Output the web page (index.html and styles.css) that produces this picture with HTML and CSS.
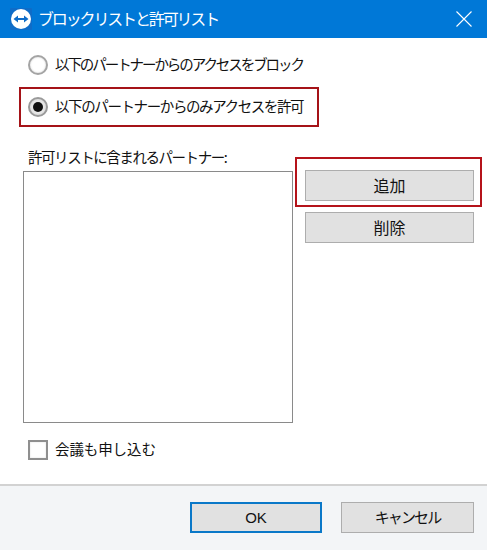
FILE: index.html
```html
<!DOCTYPE html>
<html lang="ja">
<head>
<meta charset="utf-8">
<title>ブロックリストと許可リスト</title>
<link rel="stylesheet" href="styles.css">
</head>
<body>
<div class="window">
  <header class="titlebar">
    <span class="app-icon">
      <svg viewBox="0 0 22 22" width="22" height="22">
        <rect width="22" height="22" rx="1" fill="#0e6cc8"/>
        <circle cx="11" cy="11" r="10" fill="#fff"/>
        <path d="M3.5 11 8 7.6V10h6V7.6l4.5 3.4-4.5 3.4V12H8v2.4z" fill="#0e6cc8"/>
      </svg>
    </span>
    <span class="title">ブロックリストと許可リスト</span>
    <svg class="close" viewBox="0 0 16 16" width="16" height="16">
      <path d="M.5.5l15 15M15.5.5l-15 15" stroke="#fff" stroke-width="1.1" fill="none"/>
    </svg>
  </header>
  <main class="content">
    <div class="option plain">
      <span class="radio"></span>
      <span class="label">以下のパートナーからのアクセスをブロック</span>
    </div>
    <div class="option marked">
      <span class="radio on"><span class="dot"></span></span>
      <span class="label allow">以下のパートナーからのみアクセスを許可</span>
    </div>
    <div class="list-label label">許可リストに含まれるパートナー:</div>
    <div class="list-row">
      <div class="listbox"></div>
      <div class="side">
        <div class="add-mark"><button class="btn wide">追加</button></div>
        <button class="btn wide">削除</button>
      </div>
    </div>
    <div class="check-row">
      <span class="checkbox"></span>
      <span class="label meeting">会議も申し込む</span>
    </div>
  </main>
  <footer class="footer">
    <button class="btn ok">OK</button>
    <button class="btn cancel">キャンセル</button>
  </footer>
</div>
</body>
</html>
```
FILE: styles.css
```css
* { box-sizing: border-box; }
html, body { margin: 0; padding: 0; }
body {
  width: 487px;
  height: 550px;
  overflow: hidden;
  background: #fff;
  font-family: "Noto Sans CJK JP", "Liberation Sans", sans-serif;
  color: #111;
}
.window { display: flex; flex-direction: column; height: 550px; }
.titlebar {
  flex: none;
  height: 38px;
  background: #0078d7;
  display: flex;
  align-items: center;
  padding: 0 15px 0 10px;
  color: #fff;
}
.app-icon { display: flex; width: 22px; height: 22px; margin-right: 6px; }
.title { flex: 1; font-size: 16px; letter-spacing: -2.15px; font-weight: 400; white-space: nowrap; margin-top: -2px; }
.content { flex: 1; position: relative; padding-top: 17px; }
.label { font-size: 14.5px; letter-spacing: -2.07px; font-weight: 400; line-height: 20px; white-space: nowrap; margin-top: -2px; }
.allow { letter-spacing: -1.4px; }
.meeting { letter-spacing: -0.1px; }
.option { display: flex; align-items: center; gap: 7px; }
.plain { height: 20px; margin-left: 28px; }
.marked {
  width: 300px;
  height: 40px;
  margin: 12px 0 0 19px;
  padding-left: 7px;
  border: 2px solid #a51318;
}
.radio {
  width: 20px;
  height: 20px;
  flex: none;
  border-radius: 50%;
  background: #fff;
  border: 2px solid #a4a4a4;
  box-shadow: inset 0 0 2px #ccc;
  display: flex;
  align-items: center;
  justify-content: center;
}
.radio.on { border-color: #9a9a9a; background: #e8e8e8; }
.dot { width: 10px; height: 10px; border-radius: 50%; background: #111; }
.list-label { margin: 20px 0 0 28px; height: 24px; letter-spacing: -1.45px; }
.list-row { display: flex; margin-left: 23px; }
.listbox { width: 270px; height: 252px; border: 1px solid #8a8a8a; background: #fff; }
.side { display: flex; flex-direction: column; margin-left: 2px; }
.add-mark {
  width: 187px;
  height: 50px;
  margin-top: -14px;
  padding: 11px 8px 0 8px;
  border: 2px solid #b5131a;
}
.btn {
  display: block;
  padding: 0 0 2px;
  height: 31px;
  background: #e1e1e1;
  border: 1px solid #adadad;
  font-family: inherit;
  font-size: 16px;
  font-weight: 400;
  color: #111;
}
.wide { width: 169px; letter-spacing: 0; }
.side > .btn { margin: 5px 0 0 10px; }
.check-row { display: flex; align-items: center; gap: 7px; margin: 17px 0 0 28px; height: 20px; }
.checkbox {
  width: 20px;
  height: 20px;
  flex: none;
  background: #fff;
  border: 2px solid #8f8f8f;
  box-shadow: inset 0 0 2px #ddd;
}
.footer {
  flex: none;
  height: 66px;
  background: #f3f5f7;
  border-top: 2px solid #d2d2d2;
  display: flex;
  padding: 16px 13px 0 190px;
}
.ok {
  width: 132px;
  height: 31px;
  padding: 0;
  border: 2px solid #0a78c8;
  font-family: "Liberation Sans", sans-serif;
  font-size: 15px;
}
.cancel { width: 133px; height: 31px; margin-left: 19px; font-size: 15px; letter-spacing: -1.9px; }
```
